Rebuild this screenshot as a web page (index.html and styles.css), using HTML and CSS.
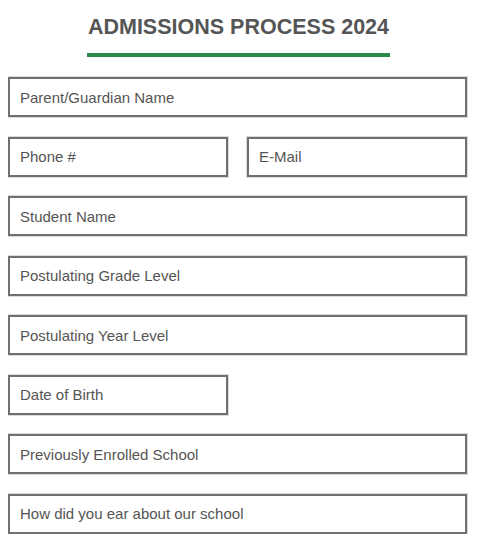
FILE: index.html
```html
<!DOCTYPE html>
<html>

<head>
    <title>Admissions Process 2024</title>
    <link rel="stylesheet" href="styles.css">
</head>

<body>
    <div class="header">
        <h1>ADMISSIONS PROCESS 2024</h1>
    </div>

    <form class="admissions">
        <input type="text" placeholder="Parent/Guardian Name">
        <div class="row">
            <input type="text" placeholder="Phone #">
            <input type="text" placeholder="E-Mail">
        </div>
        <input type="text" placeholder="Student Name">
        <input type="text" placeholder="Postulating Grade Level">
        <input type="text" placeholder="Postulating Year Level">
        <div class="row">
            <input type="text" placeholder="Date of Birth">
            <span></span>
        </div>
        <input type="text" placeholder="Previously Enrolled School">
        <input type="text" placeholder="How did you ear about our school">
    </form>
</body>

</html>
```

FILE: styles.css
```css
body {
    font-family: "Liberation Sans", Arial, sans-serif;
    background-color: #fff;
    margin: 8px;
}

.header {
    text-align: center;
    padding-top: 7px;
}

h1 {
    display: inline-block;
    margin: 0;
    padding: 0 1px 13px;
    font-size: 21.5px;
    font-weight: bold;
    color: #555;
    border-bottom: 4px solid #2a8a4a;
}

.admissions {
    display: flex;
    flex-direction: column;
    gap: 19.5px;
    margin-top: 20px;
    width: 459px;
}

.row {
    display: grid;
    grid-template-columns: 1fr 1fr;
    gap: 19px;
}

input {
    box-sizing: border-box;
    height: 40px;
    width: 100%;
    padding: 0 10px;
    border: 2px solid #707070;
    box-shadow: 0 0 0 1px #dadada;
    font-family: "Liberation Sans", Arial, sans-serif;
    font-size: 15px;
    color: #333;
    background-color: #fff;
}

input::placeholder {
    color: #555;
}
```
